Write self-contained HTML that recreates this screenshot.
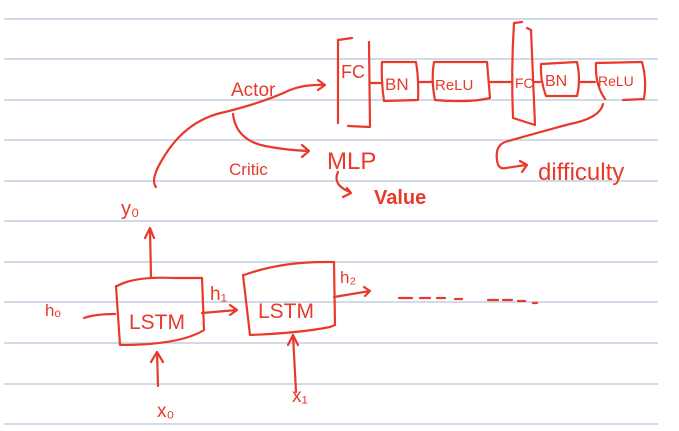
<!DOCTYPE html>
<html><head><meta charset="utf-8"><style>
html,body{margin:0;padding:0;background:#fff;width:679px;height:431px;overflow:hidden}
svg{display:block}
text{font-family:"Liberation Sans",sans-serif;fill:#e8392b}
</style></head><body>
<svg width="679" height="431" viewBox="0 0 679 431">
<g stroke="#b4c4dc" stroke-width="1.3">
<line x1="4" y1="19" x2="658" y2="19"/><line x1="4" y1="59" x2="658" y2="59"/>
<line x1="4" y1="100" x2="658" y2="100"/><line x1="4" y1="140" x2="658" y2="140"/>
<line x1="4" y1="181" x2="658" y2="181"/><line x1="4" y1="221" x2="658" y2="221"/>
<line x1="4" y1="262" x2="658" y2="262"/><line x1="4" y1="302" x2="658" y2="302"/>
<line x1="4" y1="343" x2="658" y2="343"/><line x1="4" y1="384" x2="658" y2="384"/>
<line x1="4" y1="424" x2="658" y2="424"/>
</g>
<g stroke="#e8392b" stroke-width="2.2" fill="none" stroke-linecap="round" stroke-linejoin="round">
<!-- LSTM boxes -->
<path d="M117 286 Q135 276 175 278 L202 278 L204 330 Q180 345 120 345 L116 286"/>
<path d="M244 275 Q280 262 325 262 L334 262 L335 325 L330 327 Q300 333 250 335 L243 275"/>
<!-- h0 arrow -->
<path d="M84 318 Q95 314 115 314"/>
<!-- y0 arrow -->
<path d="M151 278 L150 228 M145 238 L150 228 L154 238"/>
<!-- h1 arrow -->
<path d="M202 313 L237 310 M230 305 L237 310 L230 315"/>
<!-- h2 arrow -->
<path d="M334 297 L370 291 M364 287 L370 291 L365 296"/>
<!-- dashes -->
<path d="M399 298 L412 298 M420 298 L430 298 M437 298 L445 298 M455 299 L462 299 M488 300 L498 300 M503 300 L512 300 M518 301 L525 301 M533 303 L537 303"/>
<!-- x0, x1 arrows -->
<path d="M158 386 L157 352 M151 362 L157 352 L163 362"/>
<path d="M296 392 L293 335 M288 345 L293 335 L298 345"/>
<!-- actor curve -->
<path d="M156 187 Q150 180 162 160 Q185 120 225 112 Q265 102 290 90 Q305 84 325 85 M318 80 L325 85 L318 90"/>
<!-- critic curve -->
<path d="M233 114 Q236 140 265 146 Q285 150 308 151 M302 145 L309 151 L302 157"/>
<!-- value curve -->
<path d="M338 172 Q332 185 350 192 M343 197 L351 193 L347 188"/>
<!-- FC1 -->
<path d="M338 40 L352 38 M338 40 L338 123 M348 126 L370 127 L369 42"/>
<!-- connections -->
<path d="M370 83 L382 83 M418 82 L433 82 M490 82 L511 82 M534 82 L540 82 M579 82 L595 82"/>
<!-- BN1 -->
<path d="M382 62 L416 62 Q419 80 418 100 L384 101 Q381 80 382 62"/>
<!-- ReLU1 -->
<path d="M434 62 L487 62 L490 98 Q470 103 435 100 Q431 80 434 62"/>
<!-- FC2 -->
<path d="M514 23 L522 22 M514 23 Q511 70 513 118 L535 125 L531 30 L527 28"/>
<!-- BN2 -->
<path d="M541 64 L577 62 Q581 80 577 96 L546 96 Q540 80 541 64"/>
<!-- ReLU2 -->
<path d="M596 63 L642 62 Q647 80 644 99 L623 100 M605 99 Q595 85 596 63"/>
<!-- difficulty curve -->
<path d="M603 104 Q600 118 570 124 Q540 132 505 142 Q495 146 497 160 Q498 170 506 168 L526 165 M520 161 L527 165 L522 172"/>
</g>
<g>
<text x="129" y="329" font-size="21">LSTM</text>
<text x="258" y="318" font-size="21">LSTM</text>
<text x="45" y="316" font-size="17">hₒ</text>
<text x="121" y="215" font-size="20">y₀</text>
<text x="210" y="300" font-size="19">h₁</text>
<text x="340" y="283" font-size="17">h₂</text>
<text x="157" y="417" font-size="19">x₀</text>
<text x="292" y="402" font-size="19">x₁</text>
<text x="231" y="96" font-size="19">Actor</text>
<text x="229" y="175" font-size="17">Critic</text>
<text x="327" y="169" font-size="24">MLP</text>
<text x="374" y="204" font-size="20" font-weight="bold">Value</text>
<text x="341" y="78" font-size="18">FC</text>
<text x="385" y="90" font-size="17">BN</text>
<text x="435" y="90" font-size="15">ReLU</text>
<text x="515" y="88" font-size="14">FC</text>
<text x="545" y="86" font-size="16">BN</text>
<text x="598" y="86" font-size="14">ReLU</text>
<text x="538" y="180" font-size="24">difficulty</text>
</g>
</svg>
</body></html>
